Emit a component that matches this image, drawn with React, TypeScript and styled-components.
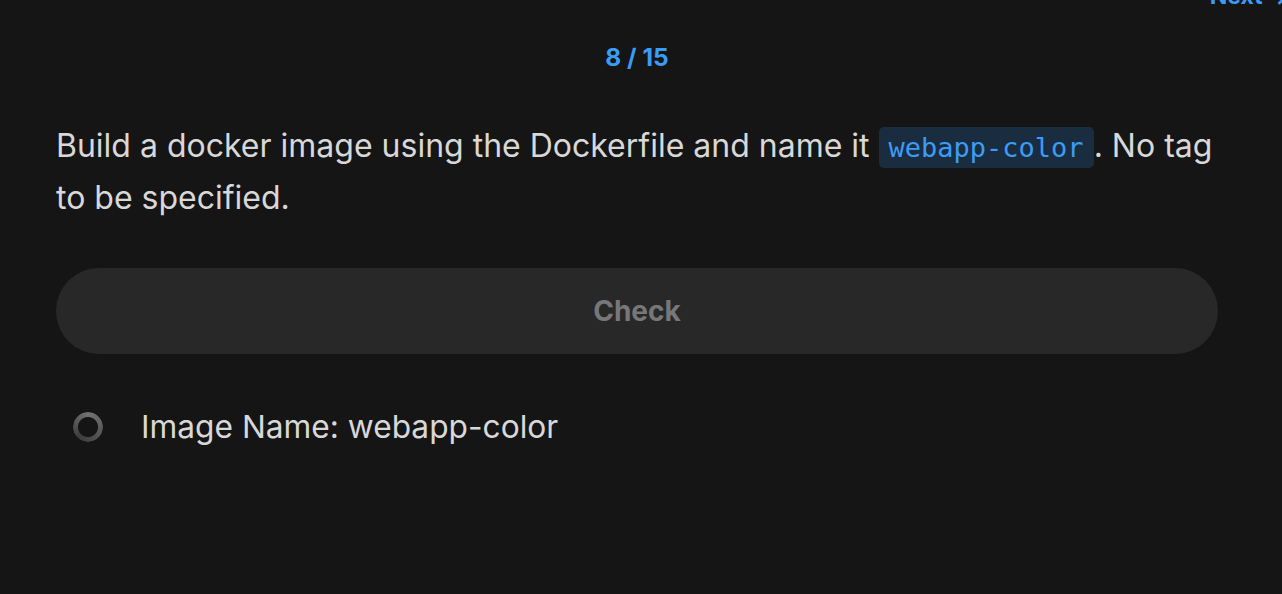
import React from "react";
import styled, { createGlobalStyle } from "styled-components";

const Global = createGlobalStyle`
  html, body { margin: 0; padding: 0; background: #151515; }
  body { font-family: Inter, "Noto Sans", sans-serif; color: #d8d8d8; overflow: hidden; }
`;

const Page = styled.div`
  width: 1282px;
  height: 594px;
  box-sizing: border-box;
  padding: 0 64px 0 56px;
  display: flex;
  flex-direction: column;
  overflow: hidden;
`;

const TopBar = styled.div`
  display: flex;
  justify-content: flex-end;
  height: 0;
  margin-right: -64px;
`;

const NextLink = styled.span`
  margin-top: -18px;
  margin-right: -8px;
  font-size: 23px;
  font-weight: 700;
  color: #3b9cf5;
  line-height: 28px;
  white-space: nowrap;
`;

const Counter = styled.div`
  margin-top: 41px;
  text-align: center;
  font-size: 24.5px;
  font-weight: 700;
  color: #3b9cf5;
  line-height: 32px;
`;

const Question = styled.p`
  margin: 48px 0 0;
  font-size: 32px;
  line-height: 50px;
  color: #d8d8d8;
`;

const Code = styled.code`
  font-family: "DejaVu Sans Mono", "Liberation Mono", monospace;
  font-size: 27px;
  color: #3b9cf5;
  background: #1a2d40;
  border-radius: 5px;
  padding: 5px 10px;
`;

const CheckButton = styled.button`
  margin-top: 45px;
  height: 86px;
  border: none;
  border-radius: 43px;
  background: #282828;
  color: #777779;
  font-family: Inter, sans-serif;
  font-size: 28px;
  font-weight: 700;
  cursor: default;
`;

const Items = styled.ul`
  list-style: none;
  margin: 53px 0 0;
  padding: 0 0 0 17px;
  display: flex;
  flex-direction: column;
`;

const Item = styled.li`
  display: flex;
  align-items: center;
  gap: 38px;
  font-size: 31.7px;
  line-height: 40px;
  color: #d8d8d8;
`;

const Ring = styled.span`
  width: 30px;
  height: 30px;
  border-radius: 50%;
  background: conic-gradient(from 0deg, #727272, #555 120deg, #3c3c3c 220deg, #5a5a5a 300deg, #727272);
  -webkit-mask: radial-gradient(circle, transparent 9.5px, #000 10.5px);
  mask: radial-gradient(circle, transparent 9.5px, #000 10.5px);
  flex-shrink: 0;
`;

export default function App() {
  return (
    <>
      <Global />
      <Page>
        <TopBar>
          <NextLink>Next →</NextLink>
        </TopBar>
        <Counter>8 / 15</Counter>
        <Question>
          Build a docker image using the Dockerfile and name it <Code>webapp-color</Code>. No tag to be specified.
        </Question>
        <CheckButton>Check</CheckButton>
        <Items>
          <Item>
            <Ring />
            Image Name: webapp-color
          </Item>
        </Items>
      </Page>
    </>
  );
}
